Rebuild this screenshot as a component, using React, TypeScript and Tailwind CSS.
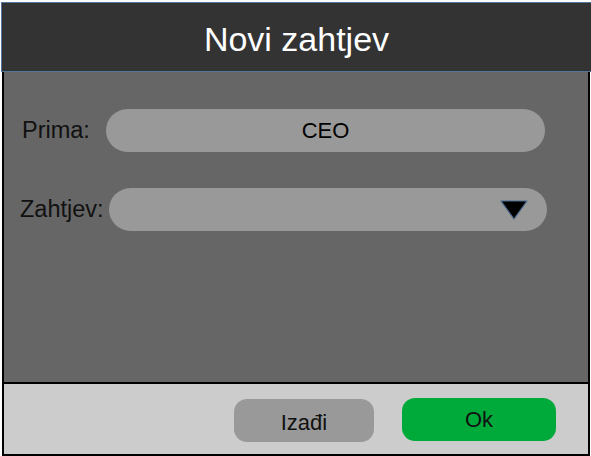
export default function App() {
  return (
    <div className="w-[591px] h-[456px] bg-white pt-[2px] overflow-hidden font-['Liberation_Sans',Arial,sans-serif]">
      <div className="ml-px w-[590px] h-[70px] bg-[#333333] border-t border-l border-b border-[#52759a] flex items-center justify-center">
        <span className="text-white text-[34px] leading-none pt-[3px]">Novi zahtjev</span>
      </div>
      <div className="ml-[2px] w-[588px] h-[310px] bg-[#666666] border-x-2 border-black flex flex-col pt-[37px] gap-[36px]">
        <div className="flex items-center h-[43px]">
          <div className="w-[102px] pl-[18px] text-[23.5px] text-[#111] whitespace-nowrap">Prima:</div>
          <div className="w-[439px] h-[43px] rounded-full bg-[#999999] flex items-center justify-center text-[22px] text-black">
            CEO
          </div>
        </div>
        <div className="flex items-center h-[43px]">
          <div className="w-[105px] pl-[16px] text-[23.5px] text-[#111] whitespace-nowrap">Zahtjev:</div>
          <div className="w-[438px] h-[43px] rounded-full bg-[#999999] flex items-center justify-end pr-[19px]">
            <svg width="28" height="20" viewBox="0 0 28 20">
              <polygon points="1,1 27,1 14,19" fill="#000" stroke="#4a6a90" strokeWidth="1.2" strokeLinejoin="round" />
            </svg>
          </div>
        </div>
      </div>
      <div className="ml-[2px] w-[588px] h-[74px] bg-[#cccccc] border-2 border-black flex justify-end items-start pr-[32px] gap-[28px]">
        <button className="mt-[15px] w-[140px] h-[43px] rounded-[13px] bg-[#999999] text-[22px] text-[#111] flex items-center justify-center pt-[3px]">
          Izađi
        </button>
        <button className="mt-[14px] w-[154px] h-[43px] rounded-[13px] bg-[#00aa3a] text-[22px] text-[#111] flex items-center justify-center">
          Ok
        </button>
      </div>
    </div>
  );
}
